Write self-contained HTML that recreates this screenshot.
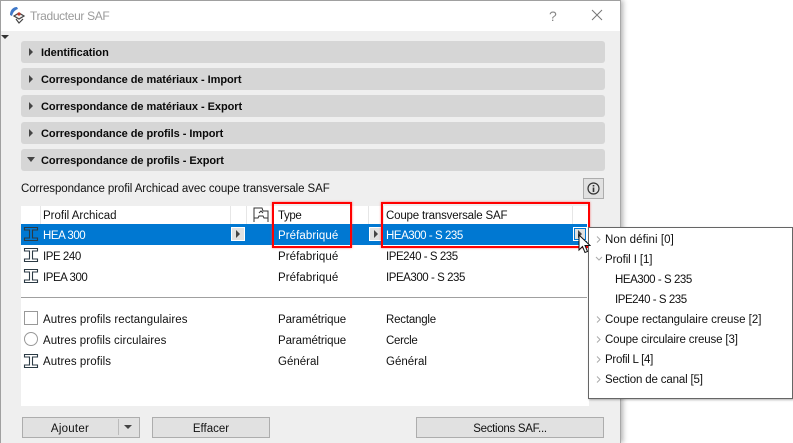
<!DOCTYPE html>
<html><head><meta charset="utf-8">
<style>
html,body{margin:0;padding:0;background:#fff;}
#p{position:relative;width:793px;height:443px;overflow:hidden;background:#fff;font-family:"Liberation Sans",sans-serif;font-size:11.5px;color:#111;}
#p div{position:absolute;white-space:nowrap;}
.bar{left:21px;width:584px;height:22px;background:#d6d6d6;border-radius:3px;}
.bt{left:41px;font-weight:bold;font-size:11px;letter-spacing:-.05px;line-height:24px;color:#0a0a0a;}
.tri{width:0;height:0;border-left:4px solid #444;border-top:4px solid transparent;border-bottom:4px solid transparent;}
.t{line-height:16px;height:16px;margin-top:1px;}
.n{letter-spacing:-.45px;}
.btn{background:#e1e1e1;border:1px solid #adadad;box-sizing:border-box;height:21px;text-align:center;line-height:23px;}
.mb{width:14px;height:14px;background:#e1e1e1;border:1px solid #fff;box-sizing:border-box;}
.red{border:2px solid #f00;box-sizing:border-box;box-shadow:0 0 2px rgba(255,60,60,.7);}
</style></head><body>
<div id="p">
<!-- window -->
<div style="left:0;top:0;width:621px;height:443px;background:#efefef;box-shadow:2px 0 5px rgba(0,0,0,.3)"></div>
<div style="left:0;top:0;width:621px;height:31px;background:#fff"></div>
<div style="left:0;top:0;width:621px;height:1px;background:#a0a0a0"></div>
<div style="left:0;top:0;width:1px;height:443px;background:#a0a0a0"></div>
<div style="left:620px;top:0;width:1px;height:443px;background:#a8a8a8"></div>
<svg style="position:absolute;left:9px;top:6px" width="18" height="18" viewBox="0 0 18 18">
<path d="M1 9C1 4 4 1 8 1L9 3C6 4 4 6 3 10Z" fill="#3f78c8"/>
<path d="M5 10L10 7L15 10L10 13Z" fill="#f2f2f2" stroke="#444" stroke-width="1.2"/>
<path d="M7 13L10 17L14 13" fill="none" stroke="#444" stroke-width="1.2"/>
<circle cx="10" cy="8" r="1.6" fill="#c0392b"/>
</svg>
<div class="t" style="left:30px;top:7px;font-size:12px;letter-spacing:-.35px;color:#9b9b9b">Traducteur SAF</div>
<div class="t" style="left:549px;top:7px;font-size:14px;color:#888">?</div>
<svg style="position:absolute;left:591px;top:9px" width="12" height="12"><path d="M1 1L11 11M11 1L1 11" stroke="#777" fill="none"/></svg>
<div style="left:1px;top:35px;width:0;height:0;border-top:4px solid #333;border-left:4px solid transparent;border-right:4px solid transparent"></div>
<!-- sections -->
<div class="bar" style="top:41px"></div><div class="tri" style="left:29px;top:48px"></div><div class="bt" style="top:41px">Identification</div>
<div class="bar" style="top:68px"></div><div class="tri" style="left:29px;top:75px"></div><div class="bt" style="top:68px">Correspondance de matériaux - Import</div>
<div class="bar" style="top:95px"></div><div class="tri" style="left:29px;top:102px"></div><div class="bt" style="top:95px">Correspondance de matériaux - Export</div>
<div class="bar" style="top:122px"></div><div class="tri" style="left:29px;top:129px"></div><div class="bt" style="top:122px">Correspondance de profils - Import</div>
<div class="bar" style="top:149px"></div><div style="left:27px;top:157px;width:0;height:0;border-top:5px solid #444;border-left:4px solid transparent;border-right:4px solid transparent"></div><div class="bt" style="top:149px">Correspondance de profils - Export</div>
<div class="t" style="left:21px;top:180px;letter-spacing:-.09px">Correspondance profil Archicad avec coupe transversale SAF</div>
<div style="left:583px;top:178px;width:21px;height:21px;box-sizing:border-box;background:#e1e1e1;border:1px solid #adadad"></div>
<svg style="position:absolute;left:587px;top:182px" width="13" height="13"><circle cx="6.5" cy="6.5" r="5.5" fill="none" stroke="#333" stroke-width="1.2"/><path d="M6.5 3v1.5M6.5 5.5v4.5" stroke="#333" stroke-width="1.6"/></svg>
<!-- table -->
<div style="left:21px;top:206px;width:568px;height:200px;background:#fff"></div>
<div style="left:40px;top:206px;width:1px;height:18px;background:#e6e6e6"></div>
<div style="left:230px;top:206px;width:1px;height:18px;background:#e6e6e6"></div>
<div style="left:246px;top:206px;width:1px;height:18px;background:#e6e6e6"></div>
<div style="left:368px;top:206px;width:1px;height:18px;background:#e6e6e6"></div>
<div style="left:383px;top:206px;width:1px;height:18px;background:#e6e6e6"></div>
<div style="left:572px;top:206px;width:1px;height:18px;background:#e6e6e6"></div>
<svg style="position:absolute;left:253px;top:207px" width="16" height="16"><path d="M1 15V1H9L10 4H15V15M1 11H5L6 9H10L11 11H15M6 6L8 4L10 6" fill="none" stroke="#333"/></svg>
<div class="t" style="left:43px;top:207px">Profil Archicad</div>
<div class="t" style="left:278px;top:207px;letter-spacing:-.4px">Type</div>
<div class="t" style="left:386px;top:207px;letter-spacing:-.18px">Coupe transversale SAF</div>
<div style="left:21px;top:224px;width:566px;height:21px;background:#0078d2"></div>
<svg style="position:absolute;left:23px;top:226px" width="16" height="16"><path d="M1.500 1.500H14.500V4H9.500V12H14.500V14.500H1.500V12H6.500V4H1.500Z" fill="none" stroke="#2b3a44" stroke-width="1.100"/></svg>
<svg style="position:absolute;left:23px;top:247px" width="16" height="16"><path d="M1.500 1.500H14.500V4H9.500V12H14.500V14.500H1.500V12H6.500V4H1.500Z" fill="none" stroke="#2b3a44" stroke-width="1.100"/></svg>
<svg style="position:absolute;left:23px;top:268px" width="16" height="16"><path d="M1.500 1.500H14.500V4H9.500V12H14.500V14.500H1.500V12H6.500V4H1.500Z" fill="none" stroke="#2b3a44" stroke-width="1.100"/></svg>
<div class="t n" style="left:43px;top:227px;color:#fff">HEA 300</div>
<div class="t" style="left:278px;top:227px;color:#fff;letter-spacing:.08px">Préfabriqué</div>
<div class="t n" style="left:386px;top:227px;color:#fff">HEA300 - S 235</div>
<div class="mb" style="left:231px;top:227px"></div><div class="tri" style="left:236px;top:230px"></div>
<div class="mb" style="left:369px;top:227px"></div><div class="tri" style="left:374px;top:230px"></div>
<div class="mb" style="left:573px;top:227px;background:#0078d2"></div><div style="left:575px;top:229px;width:10px;height:10px;background:#e1e1e1"></div><div class="tri" style="left:578px;top:230px"></div>
<div class="t n" style="left:43px;top:248px">IPE 240</div>
<div class="t" style="left:278px;top:248px;letter-spacing:.08px">Préfabriqué</div>
<div class="t n" style="left:386px;top:248px">IPE240 - S 235</div>
<div class="t n" style="left:43px;top:269px">IPEA 300</div>
<div class="t" style="left:278px;top:269px;letter-spacing:.08px">Préfabriqué</div>
<div class="t n" style="left:386px;top:269px">IPEA300 - S 235</div>
<div style="left:21px;top:297px;width:566px;height:1px;background:#a0a0a0"></div>
<div style="left:24px;top:311px;width:14px;height:14px;box-sizing:border-box;border:1px solid #999;background:#fff"></div>
<div style="left:24px;top:332px;width:14px;height:14px;box-sizing:border-box;border:1px solid #999;border-radius:50%;background:#fff"></div>
<svg style="position:absolute;left:23px;top:353px" width="16" height="16"><path d="M1.500 1.500H14.500V4H9.500V12H14.500V14.500H1.500V12H6.500V4H1.500Z" fill="none" stroke="#2b3a44" stroke-width="1.100"/></svg>
<div class="t" style="left:43px;top:311px;letter-spacing:.07px">Autres profils rectangulaires</div>
<div class="t" style="left:278px;top:311px;letter-spacing:-.08px">Paramétrique</div>
<div class="t" style="left:386px;top:311px;letter-spacing:-.2px">Rectangle</div>
<div class="t" style="left:43px;top:332px;letter-spacing:.05px">Autres profils circulaires</div>
<div class="t" style="left:278px;top:332px;letter-spacing:-.08px">Paramétrique</div>
<div class="t" style="left:386px;top:332px;letter-spacing:-.3px">Cercle</div>
<div class="t" style="left:43px;top:353px;letter-spacing:.07px">Autres profils</div>
<div class="t" style="left:278px;top:353px">Général</div>
<div class="t" style="left:386px;top:353px">Général</div>
<!-- buttons -->
<div class="btn" style="left:22px;top:417px;width:118px;padding-right:22px;letter-spacing:.25px">Ajouter</div>
<div style="left:118px;top:419px;width:1px;height:16px;background:#bbb"></div>
<div style="left:124px;top:425px;width:0;height:0;border-top:4px solid #444;border-left:4px solid transparent;border-right:4px solid transparent"></div>
<div class="btn" style="left:152px;top:417px;width:118px">Effacer</div>
<div class="btn" style="left:416px;top:417px;width:188px;letter-spacing:-.3px">Sections SAF...</div>
<!-- red -->
<div class="red" style="left:272px;top:202px;width:80px;height:46px"></div>
<div class="red" style="left:381px;top:202px;width:209px;height:46px"></div>
<!-- popup -->
<div style="left:588px;top:227px;width:205px;height:172px;box-sizing:border-box;background:#fff;border:1px solid #666;box-shadow:1px 1px 2px rgba(0,0,0,.3)"></div>
<svg style="position:absolute;left:595px;top:235px" width="8" height="150" fill="none" stroke="#aaa">
<path d="M2 1.500L5 4.500L2 7.500"/>
<path d="M1 22L4 25L7 22"/>
<path d="M2 81.500L5 84.500L2 87.500"/>
<path d="M2 101.500L5 104.500L2 107.500"/>
<path d="M2 121.500L5 124.500L2 127.500"/>
<path d="M2 141.500L5 144.500L2 147.500"/>
</svg>
<div class="t" style="left:605px;top:231px;letter-spacing:.08px">Non défini [0]</div>
<div class="t" style="left:605px;top:251px;letter-spacing:-.1px">Profil I [1]</div>
<div class="t n" style="left:615px;top:271px">HEA300 - S 235</div>
<div class="t n" style="left:615px;top:291px">IPE240 - S 235</div>
<div class="t" style="left:605px;top:311px;letter-spacing:-.03px">Coupe rectangulaire creuse [2]</div>
<div class="t" style="left:605px;top:331px;letter-spacing:-.15px">Coupe circulaire creuse [3]</div>
<div class="t" style="left:605px;top:351px;letter-spacing:-.27px">Profil L [4]</div>
<div class="t" style="left:605px;top:371px;letter-spacing:-.16px">Section de canal [5]</div>
<!-- cursor -->
<svg style="position:absolute;left:578px;top:234px" width="13" height="20"><path d="M1 1V16L4.500 12.500L7 18.500L9.500 17.500L7 11.500H12Z" fill="#fff" stroke="#111"/></svg>
</div>
</body></html>
